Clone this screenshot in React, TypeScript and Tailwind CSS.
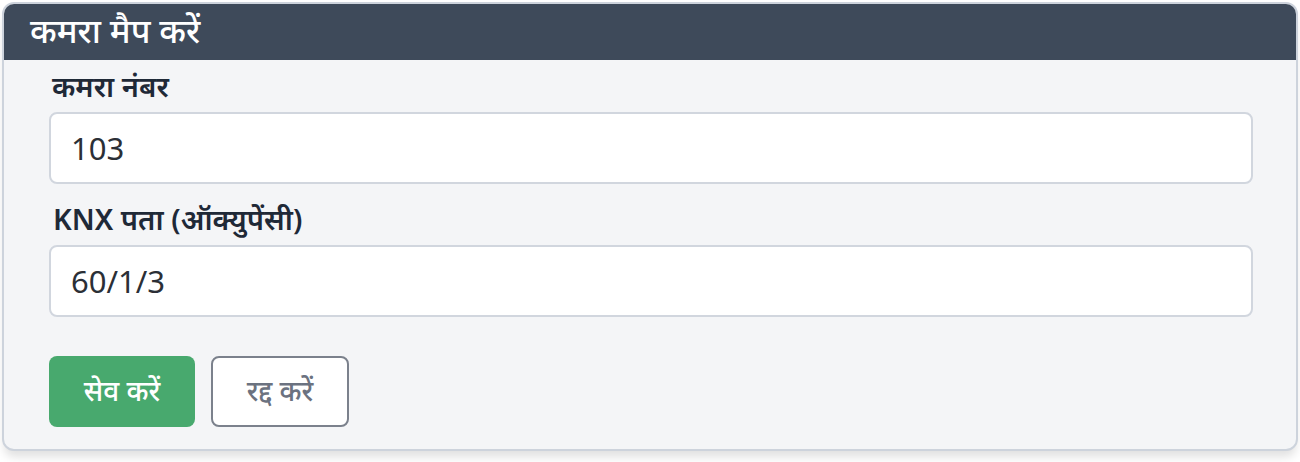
import React, { useState } from 'react';

export default function App() {
  const [room, setRoom] = useState('103');
  const [knx, setKnx] = useState('60/1/3');

  return (
    <div className="w-[1300px] h-[462px] bg-white pt-[2px] pl-[2px]" style={{ fontFamily: '"Noto Sans", "Open Sans", sans-serif' }}>
      <div className="w-[1296px] h-[449px] border-2 border-[#cdd3dc] rounded-[12px] bg-[#f4f5f7] overflow-hidden shadow-[0_8px_10px_-2px_rgba(0,0,0,0.12)] flex flex-col">
        {/* Header */}
        <div className="h-[56px] bg-[#3e4a5a] flex items-center pl-[26px] shrink-0">
          <h2 className="text-white text-[34px] font-medium leading-none pb-[4px]">कमरा मैप करें</h2>
        </div>

        {/* Form */}
        <div className="flex flex-col px-[45px]">
          <label className="mt-[10px] ml-[3px] text-[29px] font-semibold text-[#1f2937] leading-[32px]">कमरा नंबर</label>
          <input
            value={room}
            onChange={e => setRoom(e.target.value)}
            className="mt-[10px] h-[72px] w-[1204px] bg-white border-2 border-[#d1d6de] rounded-[8px] px-[20px] text-[31px] text-[#2b2f36] outline-none"
          />

          <label className="mt-[19px] ml-[4px] text-[29px] font-semibold text-[#1f2937] leading-[32px]">KNX पता (ऑक्युपेंसी)</label>
          <input
            value={knx}
            onChange={e => setKnx(e.target.value)}
            className="mt-[10px] h-[72px] w-[1204px] bg-white border-2 border-[#d1d6de] rounded-[8px] px-[20px] text-[31px] text-[#2b2f36] outline-none"
          />

          <div className="flex gap-[16px] mt-[39px]">
            <button className="w-[146px] h-[71px] rounded-[8px] bg-[#48a96e] text-white text-[28px] font-medium pb-[4px]">सेव करें</button>
            <button className="w-[138px] h-[71px] rounded-[8px] bg-white border-2 border-[#7b818c] text-[#6b7280] text-[28px] font-medium pb-[4px]">रद्द करें</button>
          </div>
        </div>
      </div>
    </div>
  );
}
